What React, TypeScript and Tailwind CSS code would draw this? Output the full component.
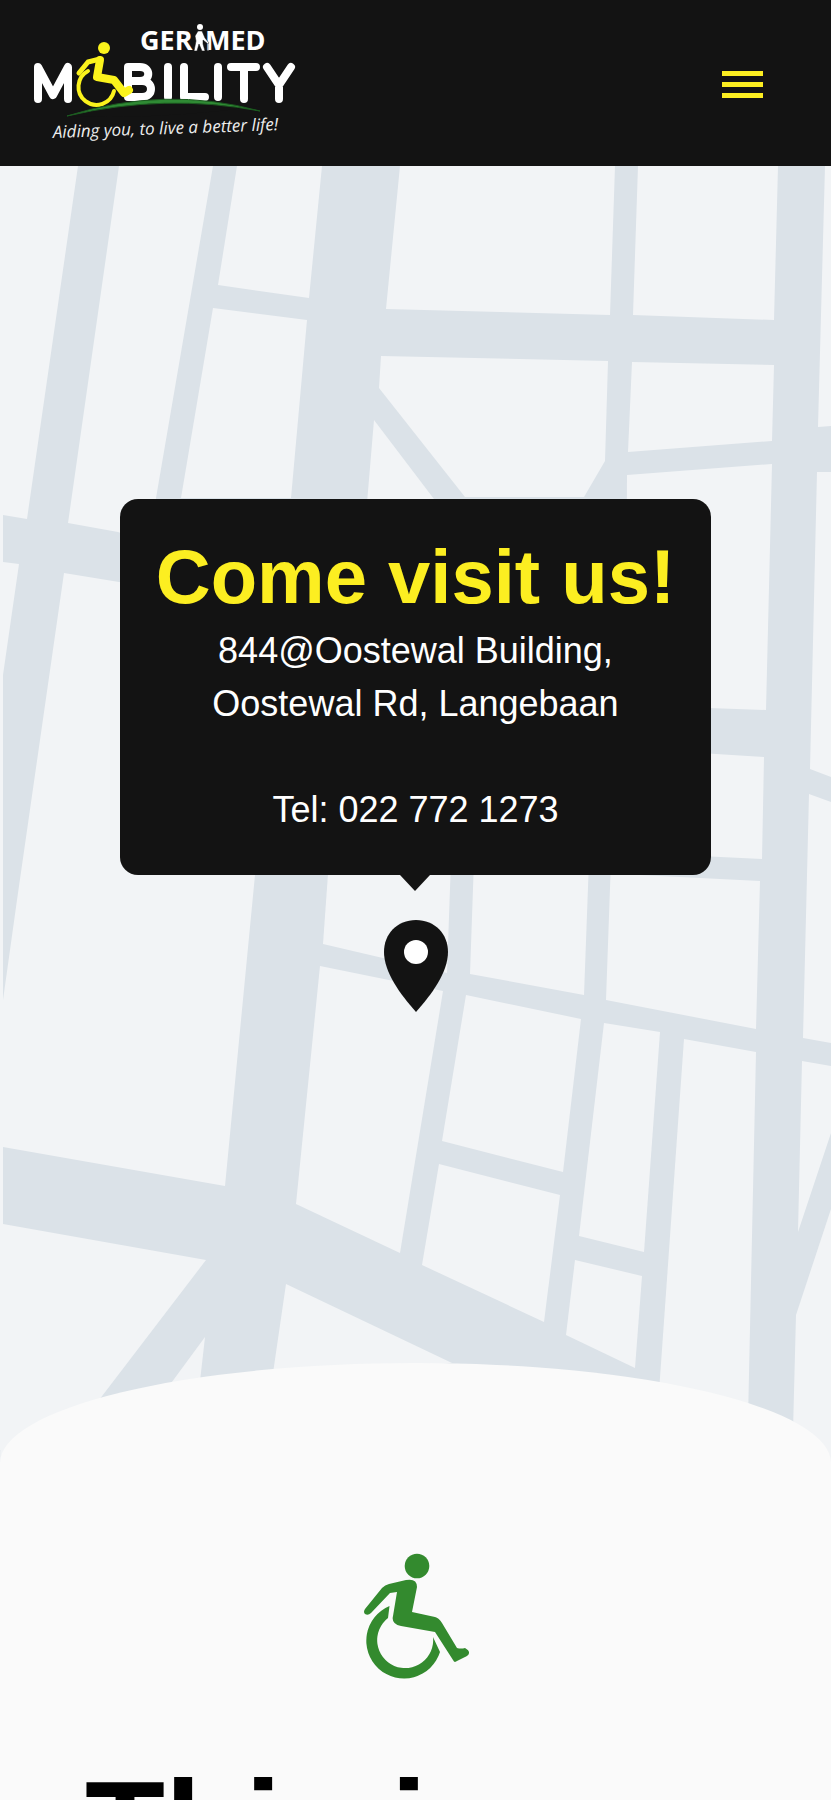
const blocks = [
  "0,166 78,166 27,519 3,515 3,562 19,564 3,675 3,1450 0,1450",
  "119,166 213,166 156,498 152,545 118,532 68,523",
  "237,166 322,166 309,298 218,285",
  "213,308 307,320 291,498 181,498",
  "400,166 615,166 610,315 386,309",
  "638,166 778,166 774,320 633,315",
  "825,166 831,166 831,426 818,427",
  "381,356 608,361 605,461 584,497 465,497 379,388",
  "632,362 774,365 772,441 628,452",
  "374,420 437,503 367,503",
  "627,475 772,464 766,710 626,705",
  "817,472 831,472 831,777 810,769",
  "700,753 764,757 762,859 700,856",
  "809,794 831,802 831,1043 803,1038",
  "64,573 119,582 262,600 255,875 225,1186 3,1147 3,1000 17,900",
  "329,860 451,860 447,973 323,944",
  "320,966 443,991 400,1253 296,1204",
  "474,860 589,860 584,995 470,974",
  "611,860 640,875 760,881 756,1029 606,1000",
  "466,995 581,1019 563,1172 442,1141",
  "604,1023 660,1032 644,1252 579,1236",
  "684,1039 756,1052 748,1420 657,1420",
  "802,1061 831,1066 831,1133 798,1232",
  "831,1209 796,1315 792,1470 831,1470",
  "439,1164 560,1195 544,1322 422,1265",
  "575,1260 642,1276 635,1368 566,1335",
  "286,1284 452,1363 272,1380",
  "205,1337 199,1390 166,1390",
  "3,1224 206,1260 96,1404 0,1470",
];

const ink = "font-['Liberation_Sans',Arial,sans-serif]";

function StreetMap() {
  return (
    <svg
      aria-hidden="true"
      viewBox="0 166 831 1297"
      preserveAspectRatio="xMidYMin slice"
      className="absolute inset-0 size-full bg-[#dbe2e8]"
    >
      {blocks.map((points) => (
        <polygon key={points} points={points} fill="#f2f4f6" />
      ))}
    </svg>
  );
}

function Logo() {
  return (
    <svg viewBox="0 0 270 130" className="h-[130px] w-[270px]" role="img" aria-label="Gerimed Mobility">
      <g fill="#fff" fontFamily="'Open Sans', 'Noto Sans', sans-serif" fontWeight="700">
        <text x="110" y="32" fontSize="27">GER</text>
        <text x="175" y="32" fontSize="27">MED</text>
      </g>
      <circle cx="170" cy="9" r="3" fill="#fff" />
      <path d="M168 13h4l3 7 4 5-1 1-5-4v4l2 7h-3l-3-7-2 7h-3l2-10-1-5z" fill="#fff" stroke="#131313" strokeWidth="0.5" />
      <path d="M178 25v8" stroke="#999" strokeWidth="1" />
      <g fill="none" stroke="#fff" strokeWidth="8" strokeLinecap="round" strokeLinejoin="round">
        <path d="M8 81V49l15 28 15-28v32" />
        <path d="M98 49v30h14c12 0 12-16 0-16H98h12c11 0 11-14 0-14z" />
        <path d="M138 49v30M154 49v30h21M188 49v30M201 49h25M214 49v32M237 49l12 18 12-18M249 67v14" />
      </g>
      <path d="M37 98Q135 73 230 94v-6Q135 102 37 98Z" fill="#131313" />
      <g fill="none" stroke="#fbf31c" strokeLinecap="round" strokeLinejoin="round">
        <circle cx="74" cy="30" r="6" fill="#fbf31c" stroke="none" />
        <path d="M49 55l9-11 12-3" strokeWidth="5" />
        <path d="M70 42l-3 17 17 3 10 13 5-3" strokeWidth="8" />
        <path d="M58 53a18 18 0 1 0 26 20" strokeWidth="4" />
      </g>
      <path d="M37 98Q135 67 230 93Q135 75 37 98Z" fill="#2f8a34" stroke="#1c5a20" />
      <text x="23" y="120" fontSize="17" fontStyle="italic" fill="#eee" fontFamily="'Open Sans', 'Noto Sans', sans-serif" transform="rotate(-2 23 120)">
        Aiding you, to live a better life!
      </text>
    </svg>
  );
}

export default function App() {
  return (
    <div className={`flex h-screen flex-col overflow-hidden bg-[#fafafa] ${ink}`}>
      <header className="flex h-[166px] shrink-0 items-center justify-between bg-[#131313] pr-[68px] pl-[30px]">
        <a href="#home" aria-label="Gerimed Mobility"><Logo /></a>
        <button type="button" aria-label="Open menu" className="flex flex-col gap-[6px] pt-[2px]">
          <span className="h-[5px] w-[41px] bg-[#fcee21]" />
          <span className="h-[5px] w-[41px] bg-[#fcee21]" />
          <span className="h-[5px] w-[41px] bg-[#fcee21]" />
        </button>
      </header>
      <main>
        <section className="relative h-[1297px]">
          <StreetMap />
          <div className="relative flex flex-col items-center pt-[333px]">
            <div className="flex w-[591px] max-w-full flex-col items-center rounded-[18px] bg-[#131313] pt-[31px] pb-[39px] text-center text-[36px] leading-[53px] text-white">
              <h1 className="text-[76px] leading-[94px] font-bold text-[#fcee21]">Come visit us!</h1>
              <p>844@Oostewal Building,<br />Oostewal Rd, Langebaan</p>
              <p className="pt-[53px]">Tel: 022 772 1273</p>
            </div>
            <svg aria-hidden="true" viewBox="0 0 32 16" className="h-4 w-8"><path d="M0 0h30L15 16z" fill="#131313" /></svg>
            <svg aria-hidden="true" viewBox="0 0 65 92" className="mt-[29px] h-[92px] w-[65px]">
              <path d="M33 0C14 0 1 14 1 32c0 20 16 42 32 60 16-18 32-40 32-60C65 14 52 0 33 0z" fill="#131313" />
              <circle cx="33" cy="32" r="12" fill="#fff" />
            </svg>
          </div>
        </section>
        <section className="relative -mt-[100px] flex flex-col rounded-t-[50%_100px] bg-[#fafafa] pt-[190px]">
          <svg aria-hidden="true" viewBox="-2 0 110 126" className="h-[126px] w-[110px] self-center" fill="#338a2e">
            <circle cx="54" cy="13" r="12.300" />
            <path d="M2 56 19 35Q22 32 26 31L43 27Q54 25 54 34L49 59 72 64Q76 65 79 70L94 95Q98 96 102 95Q109 99 104 103L92 109Q91 109 90 107L72 79 38 73Q28 71 30 63L34 39 27 40 8 60Q5 63 2 61Q0 59 2 56z" />
            <path d="M26.500 53 25 65A28 28 0 1 0 70 84L77 99A37.700 37.700 0 1 1 26.500 53z" />
          </svg>
          <h2 className="px-[85px] pt-[74px] text-[131px] leading-[150px] font-bold text-black">This is</h2>
        </section>
      </main>
    </div>
  );
}
